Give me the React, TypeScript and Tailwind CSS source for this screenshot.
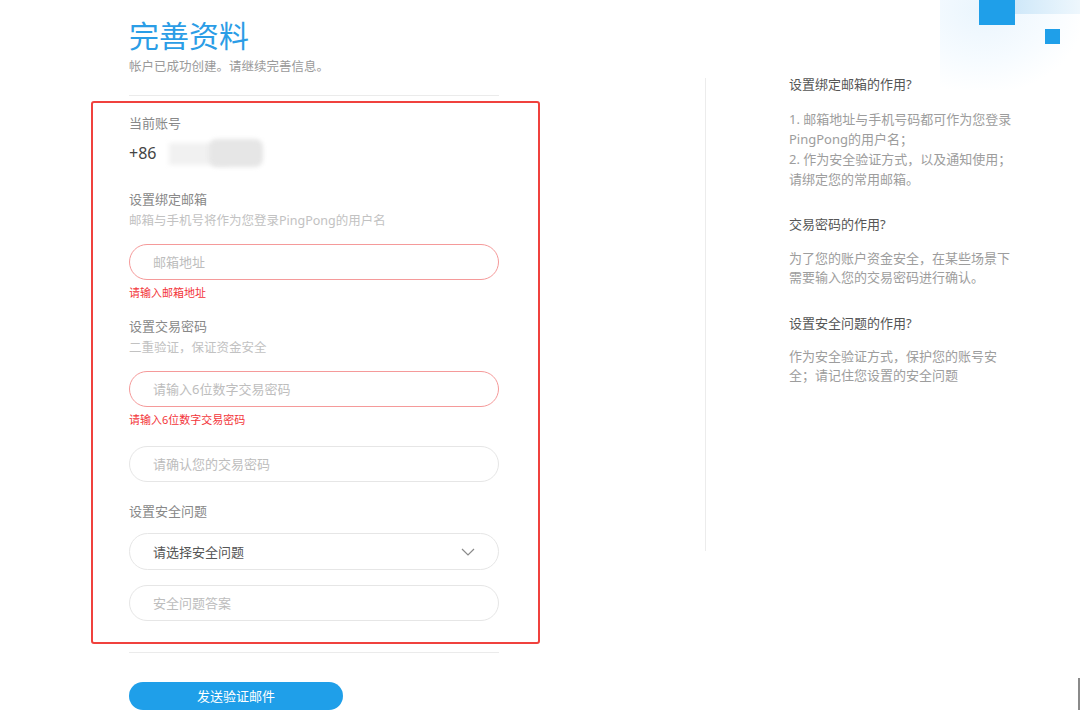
import React from "react";

const Field = ({ placeholder, error }: { placeholder: string; error?: boolean }) => (
  <div
    className={`h-[36px] w-[370px] rounded-full border flex items-center pl-[23px] text-[13px] leading-[18px] ${
      error ? "border-[#f59a9a]" : "border-[#e6e6e6]"
    } text-[#bdbdbd]`}
  >
    {placeholder}
  </div>
);

export default function App() {
  return (
    <div className="relative w-[1080px] h-[710px] overflow-hidden bg-white flex font-['Noto_Sans','Noto_Sans_CJK_SC',sans-serif]">
      {/* top-right decoration */}
      <div className="absolute right-0 top-0 w-[140px] h-[90px] bg-[radial-gradient(ellipse_at_30%_10%,#eaf5fd_0%,#f6fbff_45%,rgba(255,255,255,0)_75%)]" />
      <div className="absolute left-[1015px] top-0 w-[65px] h-[14px] bg-gradient-to-r from-[#cfe8f9] to-[#eef7fd]" />
      <div className="absolute left-[979px] top-0 w-[36px] h-[25px] bg-[#1f9fe9]" />
      <div className="absolute left-[1045px] top-[29px] w-[15px] h-[15px] bg-[#1f9fe9]" />
      <div className="absolute left-[1078px] top-[678px] w-[2px] h-[32px] bg-[#8a8a8a]" />

      {/* left column */}
      <div className="w-[705px] shrink-0 pl-[91px] flex flex-col">
        <div className="pl-[38px] w-[408px]">
          <div className="mt-[16px] text-[30px] leading-[40px] text-[#2b9de6]">完善资料</div>
          <div className="mt-[2px] text-[12.5px] leading-[18px] text-[#9a9a9a]">帐户已成功创建。请继续完善信息。</div>
          <div className="mt-[19px] h-px bg-[#ebebeb]" />
        </div>

        <div className="mt-[5px] w-[449px] border-2 border-[#f0413d] rounded-[3px] pl-[36px] pr-[39px] pt-[11px] pb-[21px] flex flex-col">
          <div className="text-[13px] leading-[18px] text-[#888]">当前账号</div>
          <div className="mt-[5px] h-[32px] flex items-center">
            <span className="text-[16px] leading-[24px] text-[#444]">+86</span>
            <div className="ml-[13px] relative w-[97px] h-[32px]">
              <div className="absolute left-0 top-[6px] w-[60px] h-[22px] bg-[#f1f1f1] blur-[2px]" />
              <div className="absolute left-[40px] top-[2px] w-[54px] h-[28px] rounded-[8px] bg-[#e6e6e6] blur-[2px]" />
            </div>
          </div>

          <div className="mt-[21px] text-[13px] leading-[18px] text-[#888]">设置绑定邮箱</div>
          <div className="mt-[4px] text-[12.5px] leading-[18px] text-[#c2c2c2]">邮箱与手机号将作为您登录PingPong的用户名</div>
          <div className="mt-[14px]">
            <Field placeholder="邮箱地址" error />
          </div>
          <div className="mt-[5px] text-[11px] leading-[16px] text-[#f3353a]">请输入邮箱地址</div>

          <div className="mt-[16px] text-[13px] leading-[18px] text-[#888]">设置交易密码</div>
          <div className="mt-[4px] text-[12.5px] leading-[18px] text-[#c2c2c2]">二重验证，保证资金安全</div>
          <div className="mt-[14px]">
            <Field placeholder="请输入6位数字交易密码" error />
          </div>
          <div className="mt-[5px] text-[11px] leading-[16px] text-[#f3353a]">请输入6位数字交易密码</div>
          <div className="mt-[18px]">
            <Field placeholder="请确认您的交易密码" />
          </div>

          <div className="mt-[20px] text-[13px] leading-[18px] text-[#888]">设置安全问题</div>
          <div className="mt-[13px] h-[37px] w-[370px] rounded-full border border-[#e6e6e6] flex items-center justify-between pl-[23px] pr-[23px]">
            <span className="text-[13px] leading-[18px] text-[#555]">请选择安全问题</span>
            <svg width="14" height="8" viewBox="0 0 14 8" fill="none">
              <polyline points="1,1 7,7 13,1" stroke="#8a8a8a" strokeWidth="1.2" />
            </svg>
          </div>
          <div className="mt-[15px]">
            <Field placeholder="安全问题答案" />
          </div>
        </div>

        <div className="ml-[38px] mt-[8px] w-[370px] h-px bg-[#ebebeb]" />
        <div className="ml-[38px] mt-[29px] w-[214px] h-[38px] rounded-full bg-[#1f9fe9] flex items-center justify-center text-white text-[13px] leading-[18px]">
          发送验证邮件
        </div>
      </div>

      {/* right column */}
      <div className="flex">
        <div className="w-px h-[473px] mt-[78px] bg-[#ececec]" />
        <div className="ml-[83px] mt-[74px] w-[240px] flex flex-col text-[13px]">
          <div className="leading-[20px] text-[#555]">设置绑定邮箱的作用?</div>
          <div className="mt-[15px] leading-[20px] text-[#9d9d9d]">
            <div>1. 邮箱地址与手机号码都可作为您登录</div>
            <div>PingPong的用户名；</div>
            <div>2. 作为安全验证方式，以及通知使用；</div>
            <div>请绑定您的常用邮箱。</div>
          </div>
          <div className="mt-[25px] leading-[20px] text-[#555]">交易密码的作用?</div>
          <div className="mt-[15px] leading-[19px] text-[#9d9d9d]">
            <div>为了您的账户资金安全，在某些场景下</div>
            <div>需要输入您的交易密码进行确认。</div>
          </div>
          <div className="mt-[26px] leading-[20px] text-[#555]">设置安全问题的作用?</div>
          <div className="mt-[14px] leading-[19px] text-[#9d9d9d]">
            <div>作为安全验证方式，保护您的账号安</div>
            <div>全；请记住您设置的安全问题</div>
          </div>
        </div>
      </div>
    </div>
  );
}
